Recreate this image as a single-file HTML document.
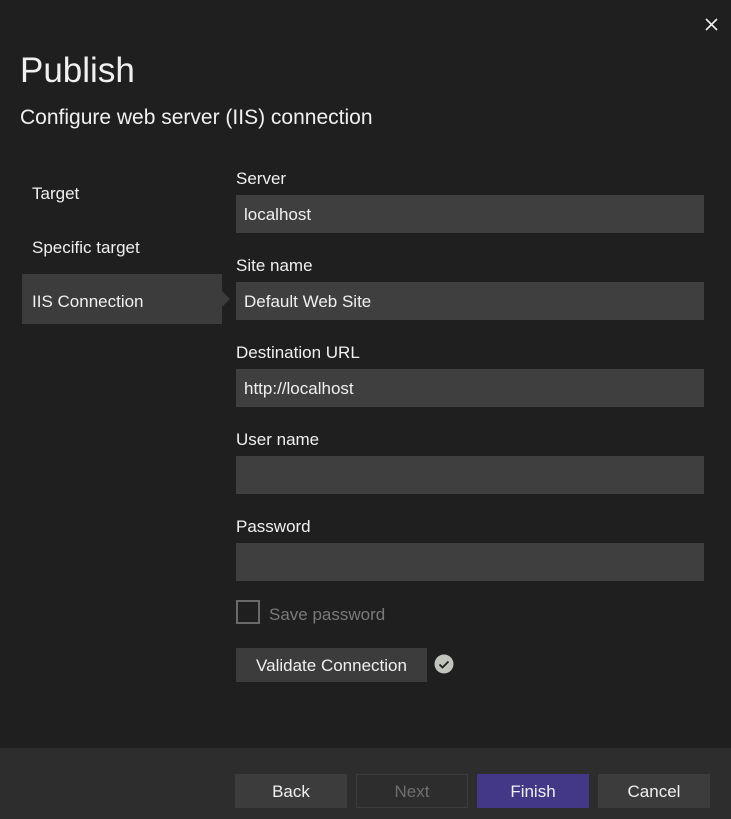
<!DOCTYPE html>
<html><head><style>
*{margin:0;padding:0;box-sizing:border-box}
body{width:731px;height:819px;background:#1f1f1f;font-family:"Liberation Sans",sans-serif;color:#f0f0f0;position:relative;overflow:hidden}
.a{position:absolute}
.lbl{position:absolute;left:236px;font-size:17px;color:#f0f0f0}
.inp{position:absolute;left:236px;width:468px;height:38px;background:#3f3f3f;font-size:17px;padding:10px 8px;color:#f0f0f0}
.nav{position:absolute;left:32px;font-size:17px}
.btn{position:absolute;top:774px;width:112px;height:34px;background:#3c3c3c;font-size:17px;text-align:center;line-height:36px}
</style></head><body>
<svg class="a" style="left:705px;top:18px" width="13" height="13" viewBox="0 0 13 13"><path d="M1 1L12 12M12 1L1 12" stroke="#f0f0f0" stroke-width="1.6"/></svg>
<div class="a" style="left:20px;top:51px;font-size:35px">Publish</div>
<div class="a" style="left:20px;top:106px;font-size:21px">Configure web server (IIS) connection</div>
<div class="nav" style="top:184px">Target</div>
<div class="nav" style="top:238px">Specific target</div>
<div class="a" style="left:22px;top:274px;width:200px;height:50px;background:#3c3c3c"></div>
<div class="a" style="left:222px;top:291px;width:0;height:0;border-top:8px solid transparent;border-bottom:8px solid transparent;border-left:8px solid #3c3c3c"></div>
<div class="nav" style="top:292px">IIS Connection</div>
<div class="lbl" style="top:169px">Server</div>
<div class="inp" style="top:195px">localhost</div>
<div class="lbl" style="top:256px">Site name</div>
<div class="inp" style="top:282px">Default Web Site</div>
<div class="lbl" style="top:343px">Destination URL</div>
<div class="inp" style="top:369px">http://localhost</div>
<div class="lbl" style="top:430px">User name</div>
<div class="inp" style="top:456px"></div>
<div class="lbl" style="top:517px">Password</div>
<div class="inp" style="top:543px"></div>
<div class="a" style="left:236px;top:600px;width:24px;height:24px;border:2px solid #6a6a6a"></div>
<div class="a" style="left:269px;top:605px;font-size:17px;color:#7a7a7a">Save password</div>
<div class="a" style="left:236px;top:648px;width:191px;height:34px;background:#3c3c3c;font-size:17px;text-align:center;line-height:36px">Validate Connection</div>
<svg class="a" style="left:434px;top:654px" width="20" height="20" viewBox="0 0 20 20"><circle cx="10" cy="10" r="9.5" fill="#c0c4bc"/><path d="M5.5 10.5l3 3 6-6" stroke="#1f1f1f" stroke-width="1.8" fill="none"/></svg>
<div class="a" style="left:0;top:748px;width:731px;height:71px;background:#2d2d2d"></div>
<div class="btn" style="left:235px">Back</div>
<div class="btn" style="left:356px;background:#2d2d2d;border:1px solid #3c3c3c;color:#6f6f6f;line-height:34px">Next</div>
<div class="btn" style="left:477px;background:#433888">Finish</div>
<div class="btn" style="left:598px">Cancel</div>
</body></html>
